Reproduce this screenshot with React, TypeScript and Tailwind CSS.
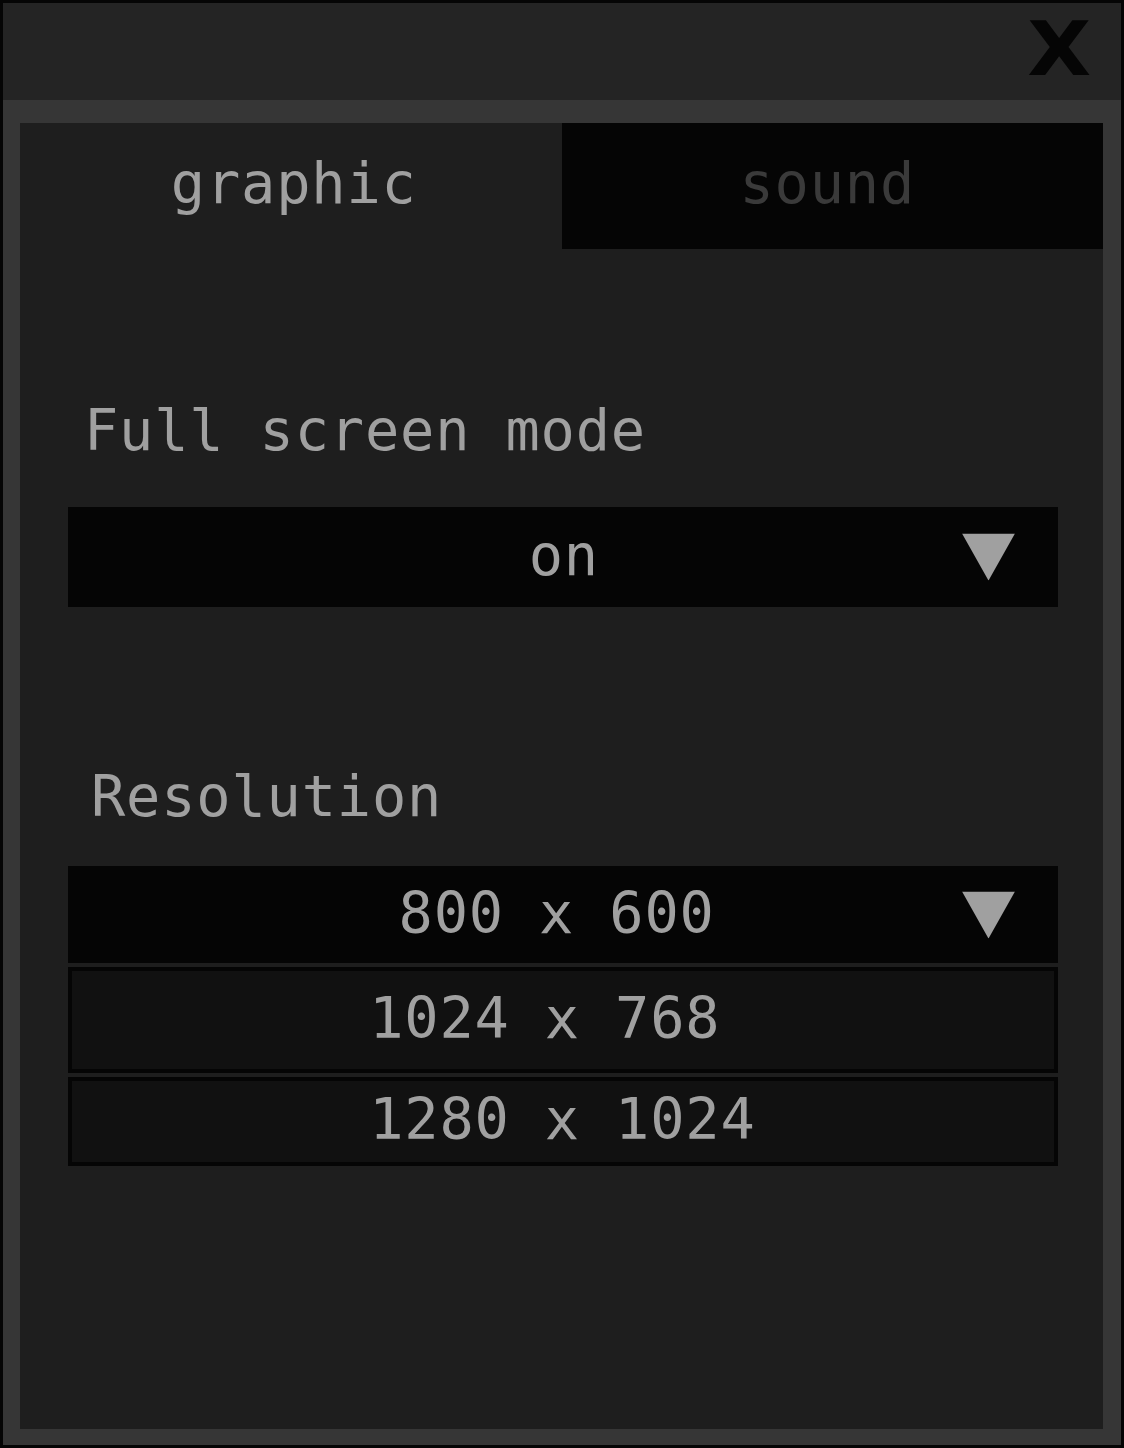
import React from "react";

const mono = "font-['DejaVu_Sans_Mono','Liberation_Mono',monospace]";

function Caret() {
  return (
    <svg width="53" height="47" viewBox="0 0 53 47" className="absolute right-[43px] top-1/2 -translate-y-1/2">
      <polygon points="0,0 53,0 26.5,47" fill="#a0a0a0" />
    </svg>
  );
}

function Select({ value, height, width }: { value: string; height: string; width: string }) {
  return (
    <div className={`relative flex items-center justify-center bg-[#050505] ${height}`}>
      <span className={`${width} whitespace-nowrap text-left leading-none -mt-[3px]`}>{value}</span>
      <Caret />
    </div>
  );
}

export default function App() {
  return (
    <div className={`w-[1124px] h-[1448px] border-[3px] border-[#050505] bg-[#363636] flex flex-col text-[57px] tracking-[0.8px] text-[#a0a0a0] ${mono}`}>
      {/* title bar */}
      <div className="h-[97px] bg-[#242424] flex items-start justify-end pr-[30px]">
        <span className="mt-[9px] font-['DejaVu_Sans',sans-serif] font-bold text-[74px] leading-[1] tracking-normal text-[#050505] scale-x-[1.12] origin-right">
          X
        </span>
      </div>

      <div className="flex-1 flex flex-col pl-[17px] pr-[18px] pt-[23px] pb-[16px]">
        <div className="flex-1 flex flex-col bg-[#1e1e1e]">
          {/* tabs */}
          <div className="grid grid-cols-2 h-[126px]">
            <div className="flex items-center justify-center leading-none pb-[6px] pl-[6px]">graphic</div>
            <div className="flex items-center justify-center bg-[#050505] text-[#3a3a3a] leading-none pb-[6px] pr-[10px]">sound</div>
          </div>

          <div className="flex flex-col ml-[48px] mr-[45px]">
            <div className="mt-[153px] pl-[16px] leading-none">Full screen mode</div>
            <div className="mt-[48px]">
              <Select value="on" height="h-[100px]" width="w-[2ch]" />
            </div>

            <div className="mt-[161px] pl-[23px] leading-none">Resolution</div>
            <div className="mt-[41px] flex flex-col gap-[4px]">
              <Select value="800 x 600" height="h-[97px]" width="w-[calc(9ch+20px)]" />
              <div className="h-[106px] border-[4px] border-[#050505] bg-[#111111] flex items-center justify-center">
                <span className="w-[calc(11ch+10px)] whitespace-nowrap leading-none -mt-[4px]">1024 x 768</span>
              </div>
              <div className="h-[89px] border-[4px] border-[#050505] bg-[#111111] flex items-center justify-center">
                <span className="w-[calc(11ch+10px)] whitespace-nowrap leading-none -mt-[4px]">1280 x 1024</span>
              </div>
            </div>
          </div>
        </div>
      </div>
    </div>
  );
}
